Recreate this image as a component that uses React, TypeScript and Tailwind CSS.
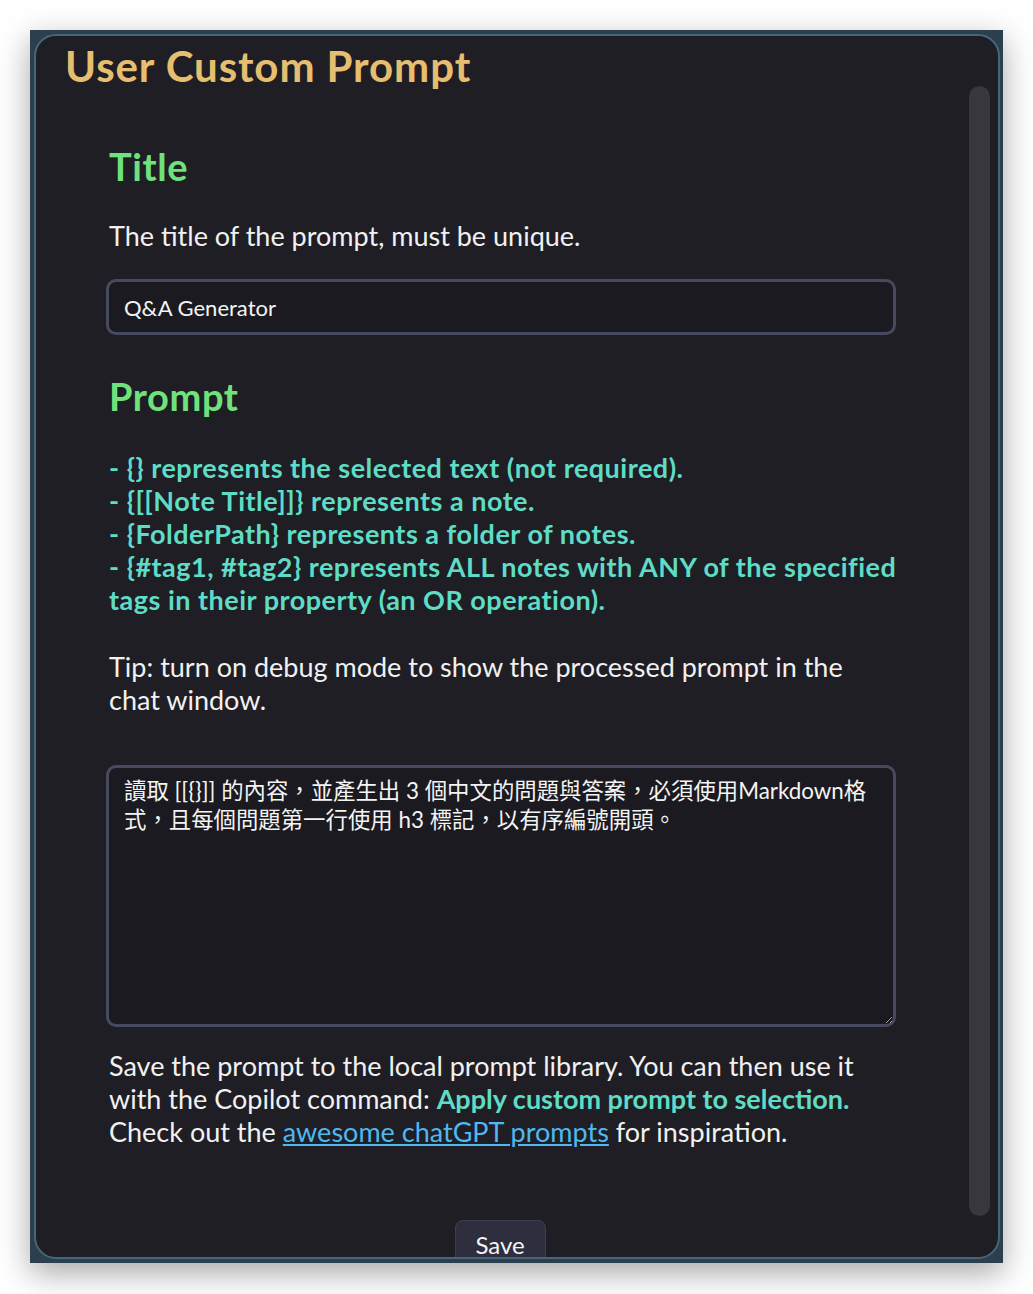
import type { ReactNode } from 'react'

const font = { fontFamily: 'Lato, "Noto Sans CJK TC", sans-serif' }

function SectionHeading({ children }: { children: ReactNode }) {
  return <h2 className="text-[38px] font-bold leading-[48px] tracking-[0.6px] text-[#6fe27c]">{children}</h2>
}

export default function App() {
  return (
    <div className="h-[1294px] w-[1033px] bg-white pl-[30px] pt-[30px]" style={font}>
      <div className="h-[1233px] w-[973px] bg-[#2b3f4e] p-[4px] pr-[3px] shadow-[0_10px_30px_rgba(0,0,0,0.35)]">
        <div className="relative flex h-full overflow-hidden rounded-[22px] border-2 border-[#46667c] bg-[#1f1e24]">
          <div className="flex-1 pl-[29px] pt-[3px]">
            <h1 className="text-[42px] font-bold leading-[54px] tracking-[0.9px] text-[#e6be6f]">User Custom Prompt</h1>

            <div className="w-[852px] pl-[44px] pt-[49px]">
              <SectionHeading>Title</SectionHeading>
              <p className="mt-[29px] text-[27px] leading-[34px] text-[#f1f1f1]">
                The title of the prompt, must be unique.
              </p>
              <div className="mt-[26px] -ml-[3px] flex h-[56px] w-[790px] items-center rounded-[10px] border-[3px] border-[#474a5e] bg-[#1b1a20] px-[15px] text-[22px] text-[#f4f4f4]">
                Q&amp;A Generator
              </div>

              <div className="mt-[37px]">
                <SectionHeading>Prompt</SectionHeading>
              </div>
              <div className="mt-[31px] text-[27px] font-bold leading-[33px] tracking-[0.5px] text-[#5fdcc6]">
                <p>- {'{}'} represents the selected text (not required).</p>
                <p>- {'{[[Note Title]]}'} represents a note.</p>
                <p>- {'{FolderPath}'} represents a folder of notes.</p>
                <p>
                  - {'{#tag1, #tag2}'} represents ALL notes with ANY of the specified
                  <br />
                  tags in their property (an OR operation).
                </p>
              </div>
              <p className="mt-[34px] w-[788px] text-[27px] leading-[33px] text-[#f1f1f1]">
                Tip: turn on debug mode to show the processed prompt in the chat window.
              </p>

              <textarea
                className="mt-[49px] -ml-[3px] block h-[262px] w-[790px] resize-y rounded-[10px] border-[3px] border-[#474a5e] bg-[#1b1a20] px-[15px] py-[8px] text-[22.4px] leading-[29px] text-[#f4f4f4] outline-none"
                style={font}
                defaultValue="讀取 [[{}]] 的內容，並產生出 3 個中文的問題與答案，必須使用Markdown格式，且每個問題第一行使用 h3 標記，以有序編號開頭。"
              />

              <p className="mt-[22px] w-[788px] text-[27px] leading-[33px] text-[#f1f1f1]">
                Save the prompt to the local prompt library. You can then use it with the Copilot command:{' '}
                <strong className="font-bold text-[#5fdcc6]">Apply custom prompt to selection.</strong> Check out the{' '}
                <a className="text-[#4fb8f0] underline" href="#">
                  awesome chatGPT prompts
                </a>{' '}
                for inspiration.
              </p>

              <div className="-ml-[4px] mt-[72px] flex w-[790px] items-start justify-center">
                <button className="w-[91px] rounded-t-[8px] border border-[#3c3d50] bg-[#2e2e3e] pb-[14px] pt-[10px] text-[24px] leading-[28px] text-[#f4f4f4]">
                  Save
                </button>
              </div>
            </div>
          </div>
          <div className="absolute right-[8px] top-[50px] h-[1130px] w-[21px] rounded-full bg-[#38373e]" />
        </div>
      </div>
    </div>
  )
}
